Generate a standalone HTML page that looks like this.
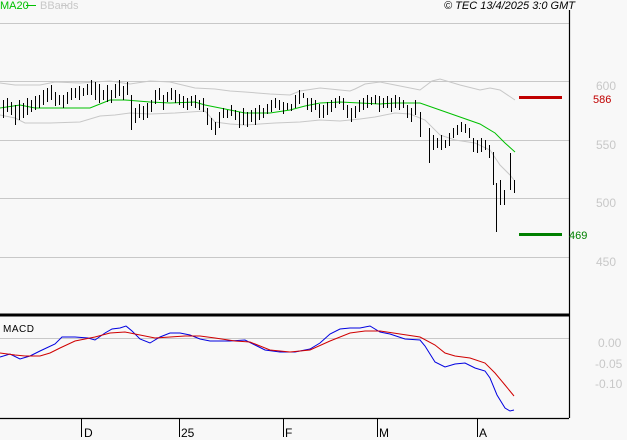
<!DOCTYPE html>
<html><head><style>
body{margin:0;background:#f8f8f8;}
svg{display:block;font-family:"Liberation Sans",sans-serif;}
</style></head><body>
<svg width="627" height="440" viewBox="0 0 627 440">
<rect width="627" height="440" fill="#f8f8f8"/>
<g stroke="#c8c8c8" stroke-width="1">
<path d="M0 23.5H569M0 81.5H569M0 140.5H569M0 198.5H569M0 257.5H569M0 338.5H569"/>
</g>
<text x="0" y="9" font-size="11" fill="#00c000">MA20</text>
<path d="M26 5.5H36" stroke="#00c000"/>
<text x="40" y="9" font-size="11" fill="#c8c8c8">BBands</text>
<path d="M61 5.5H68" stroke="#c8c8c8"/>
<text x="575" y="9" font-size="11" font-style="italic" text-anchor="end" fill="#000">© TEC 13/4/2025 3:0 GMT</text>
<g fill="none" stroke="#c8c8c8" stroke-width="1">
<polyline points="0,83 15,85 40,85 55,82 80,83 110,81 130,84 150,81 170,82 195,88 215,89 230,91 245,92 270,94 290,95 300,91 320,88 350,91 355,89 365,84 380,82 395,85 420,90 432,81 440,79 460,85 480,90 490,88 500,90 515,100"/>
<polyline points="0,115 15,118 25,123 50,123 80,122 100,116 115,115 130,113 150,114 175,113 205,111 215,122 230,124 245,125 275,123 300,122 320,120 340,121 360,119 375,117 395,113 410,114 425,120 440,135 455,140 475,143 490,150 500,165 510,175 514,180"/>
</g>
<polyline fill="none" stroke="#00c000" points="0,108 20,105 35,108 60,108 90,108 100,104 110,100 125,100 150,102 170,103 195,102 205,105 220,108 245,113 270,113 290,110 305,106 320,103 340,102 360,103 380,104 395,103 420,103 440,110 460,117 480,124 495,133 505,143 515,152"/>
<path stroke="#000" stroke-width="1" fill="none" d="
M3.5 100V118M7.5 98V112M11.5 102V115M15.5 105V125M19.5 100V120M23.5 103V118M27.5 98V115M31.5 100V112M35.5 96V110M39.5 95V108M43.5 90V105M47.5 88V102M51.5 85V100M55.5 92V106M59.5 95V105M63.5 95V108M67.5 92V104M71.5 88V100M75.5 88V98M79.5 86V100M83.5 88V96M87.5 84V95M91.5 80V95M95.5 82V100M99.5 84V103M103.5 90V100M107.5 85V102M111.5 90V103M115.5 84V98M119.5 80V96M123.5 86V100M127.5 82V95M131.5 95V130M135.5 108V123M139.5 104V118M143.5 106V120M147.5 103V118M151.5 100V112M155.5 90V104M159.5 88V100M163.5 95V110M167.5 92V102M171.5 88V100M175.5 90V103M179.5 94V105M183.5 96V108M187.5 98V110M191.5 96V106M195.5 95V108M199.5 100V110M203.5 98V112M207.5 108V125M211.5 118V130M215.5 122V135M219.5 112V128M223.5 108V118M227.5 110V118M231.5 105V116M235.5 110V120M239.5 112V128M243.5 108V125M247.5 112V127M251.5 110V122M255.5 108V125M259.5 105V120M263.5 108V118M267.5 104V114M271.5 100V112M275.5 98V108M279.5 100V110M283.5 102V114M287.5 103V110M291.5 104V111M295.5 95V108M299.5 90V104M303.5 93V98M307.5 98V110M311.5 98V112M315.5 100V110M319.5 104V118M323.5 105V118M327.5 102V115M331.5 100V112M335.5 98V108M339.5 96V104M343.5 98V110M347.5 105V118M351.5 108V122M355.5 106V118M359.5 100V112M363.5 98V110M367.5 95V108M371.5 97V105M375.5 95V104M379.5 96V112M383.5 98V108M387.5 96V108M391.5 98V112M395.5 95V108M399.5 97V110M403.5 100V108M407.5 105V118M411.5 108V122M415.5 100V115M420.5 112V137M429.5 128V163M433.5 135V150M437.5 138V148M441.5 135V150M445.5 140V148M449.5 133V146M453.5 128V138M457.5 125V135M461.5 122V132M465.5 124V133M469.5 128V138M473.5 138V152M477.5 140V153M481.5 138V152M485.5 140V150M489.5 145V158M493.5 152V185M496.5 183V232M500.5 180V205M504.5 190V205M510.5 153V190M514.5 180V193"/>
<path d="M519 97.5H562" stroke="#c00000" stroke-width="3"/>
<path d="M519 234.5H562" stroke="#008000" stroke-width="3"/>
<path d="M0 315H569" stroke="#000" stroke-width="3"/>
<path d="M569.5 10V418M0 418.5H569" stroke="#000" stroke-width="1.2"/>
<path d="M81.5 418V437M179.5 418V437M283.5 418V437M377.5 418V437M477.5 418V437" stroke="#000"/>
<g font-size="12" fill="#000">
<text x="84" y="437">D</text><text x="181" y="437">25</text><text x="285" y="437">F</text><text x="379" y="437">M</text><text x="479" y="437">A</text>
</g>
<text x="3" y="332" font-size="10" fill="#000" letter-spacing="0.5">MACD</text>
<polyline fill="none" stroke="#0000e0" points="0,357 10,354 20,359 30,356 40,351 55,344 62,337 75,337 88,338 95,340 105,333 112,329 120,328 126,326 132,331 140,339 150,343 160,337 170,333 180,333 190,335 200,339 210,341 230,341 245,340 255,345 265,350 280,352 295,352 310,349 320,343 330,334 340,329 350,328 360,328 370,326 380,332 390,334 405,339 420,340 425,346 435,362 445,367 455,364 465,363 475,368 485,371 490,378 497,395 505,408 510,411 514,410"/>
<polyline fill="none" stroke="#d00000" points="0,353 15,355 25,356 40,356 50,353 60,348 75,341 85,339 95,337 110,333 125,332 135,334 155,338 170,337 185,336 200,336 215,338 235,341 250,342 270,350 290,352 310,350 330,341 350,333 365,331 380,331 400,334 420,337 435,345 445,353 455,356 470,358 485,363 495,373 505,385 514,396"/>
<g font-size="12" fill="#c8c8c8">
<text x="596" y="90">600</text><text x="596" y="149">550</text><text x="596" y="207">500</text><text x="596" y="266">450</text>
<text x="598" y="347">0.00</text><text x="595" y="368">-0.05</text><text x="595" y="388">-0.10</text>
</g>
<text x="593" y="103" font-size="11" fill="#c00000">586</text>
<text x="569" y="239" font-size="11" fill="#008000">469</text>
</svg>
</body></html>
